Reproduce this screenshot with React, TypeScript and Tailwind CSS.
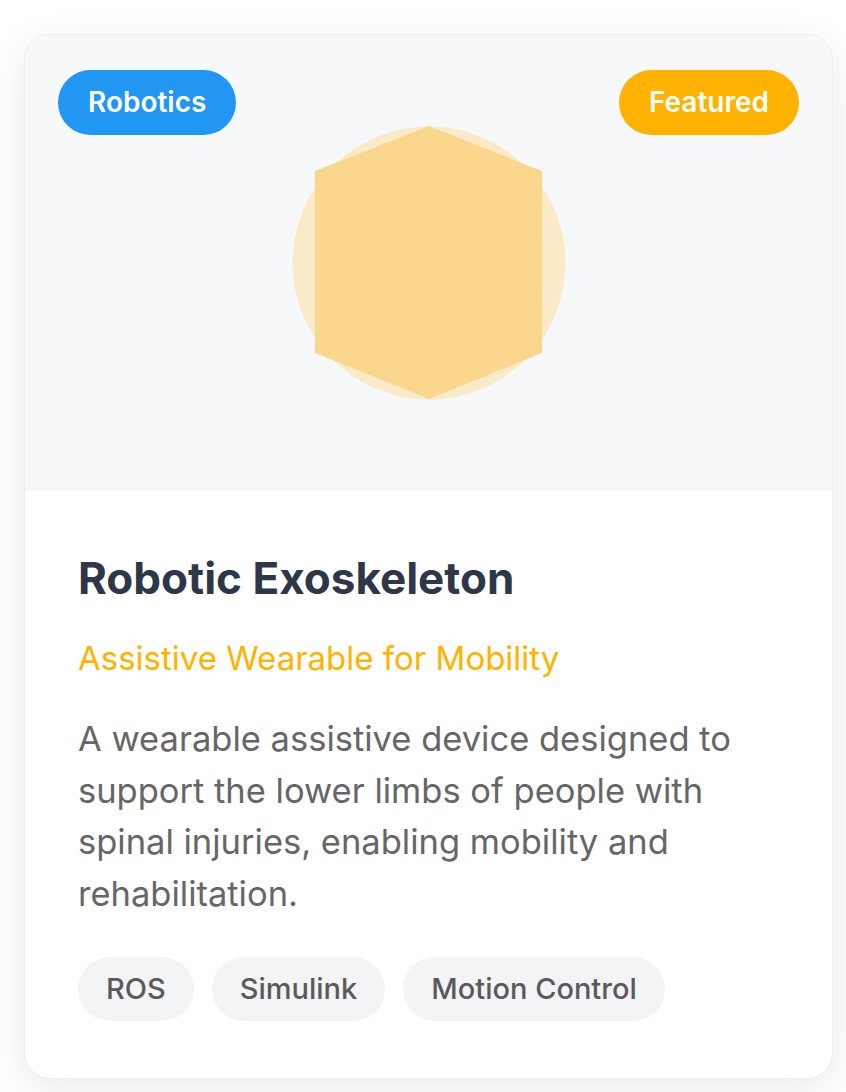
export default function App() {
  const tags = ["ROS", "Simulink", "Motion Control"];
  return (
    <div className="min-h-screen bg-white pt-[34px] pl-[24px] font-['Inter',sans-serif]">
      <div className="w-[809px] overflow-hidden rounded-[26px] border border-[#eceef3] bg-white shadow-[0_10px_44px_rgba(0,0,0,0.09)]">
        <div className="relative flex h-[456px] items-center justify-center bg-[#f7f8fa]">
          <span className="absolute left-[33px] top-[35px] rounded-full bg-[#2196f3] px-[30px] py-[11px] text-[28px] font-semibold leading-[43px] text-white">
            Robotics
          </span>
          <span className="absolute right-[33px] top-[35px] rounded-full bg-[#ffb300] px-[30px] py-[11px] text-[28px] font-semibold leading-[43px] text-white">
            Featured
          </span>
          <svg width="274" height="274" viewBox="0 0 274 274">
            <circle cx="137" cy="137" r="136.5" fill="#f9eac8" />
            <polygon
              points="137,0 250,45 250,227 137,273 23,227 23,45"
              fill="#fad78c"
            />
          </svg>
        </div>
        <div className="px-[53px] pt-[61px] pb-[57px]">
          <h2 className="text-[44px] font-bold leading-[1.2] text-[#2d3748]">
            Robotic Exoskeleton
          </h2>
          <p className="mt-[30px] text-[33px] leading-[1.4] text-[#ffb300]">
            Assistive Wearable for Mobility
          </p>
          <p className="mt-[32px] text-[34.5px] leading-[1.5] text-[#666666]">
            A wearable assistive device designed to support the lower limbs of
            people with spinal injuries, enabling mobility and rehabilitation.
          </p>
          <div className="mt-[37px] flex flex-wrap gap-[18px]">
            {tags.map((t) => (
              <span
                key={t}
                className="rounded-full bg-[#f3f4f6] px-[28px] py-[11px] text-[29px] font-medium leading-[42px] text-[#5a5a5a]"
              >
                {t}
              </span>
            ))}
          </div>
        </div>
      </div>
    </div>
  );
}
